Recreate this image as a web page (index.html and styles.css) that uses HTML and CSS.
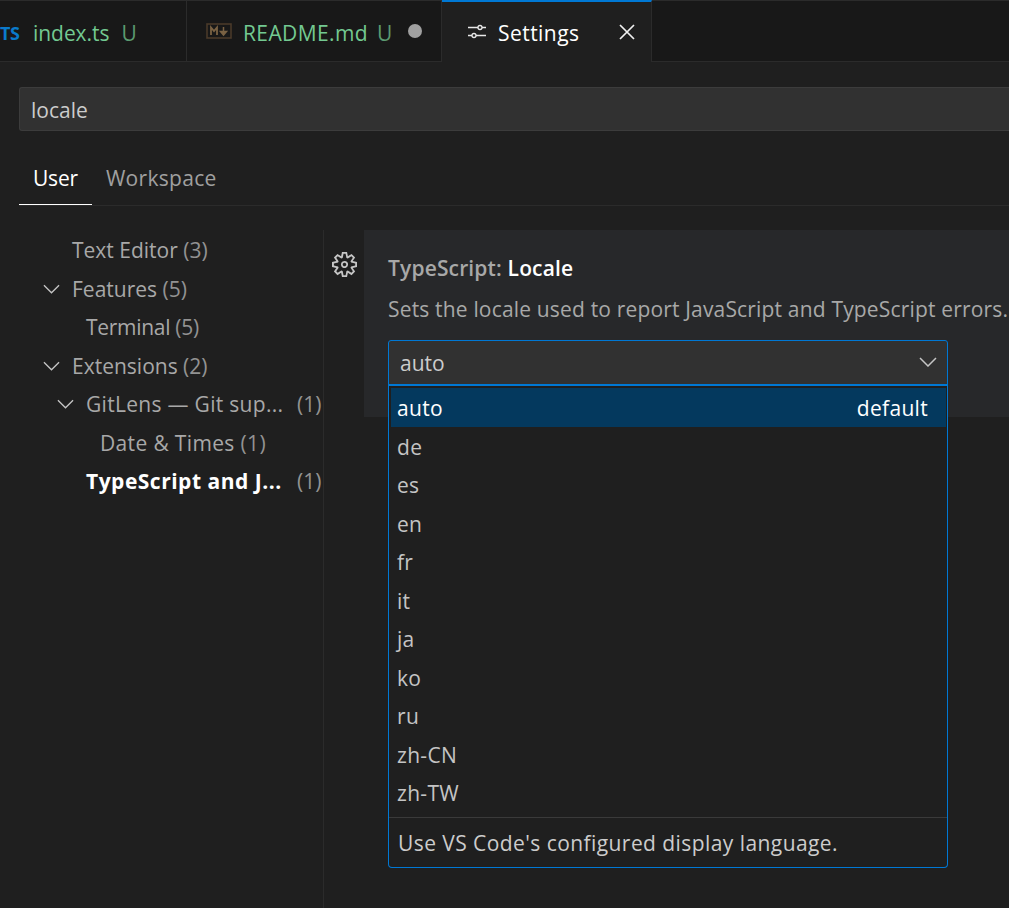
FILE: index.html
```html
<!DOCTYPE html>
<html lang="en">
<head>
    <meta charset="UTF-8">
    <title>Settings</title>
    <link rel="stylesheet" href="styles.css">
</head>
<body>
    <div class="tabs">
        <div class="tab tab-index">
            <span class="ts-icon">TS</span>
            <span class="tab-name name-index">index.ts</span>
            <span class="tab-u">U</span>
        </div>
        <div class="tab tab-readme">
            <svg class="md-icon" width="26" height="16" viewBox="0 0 26 16">
                <rect x="1" y="1" width="24" height="14" fill="none" stroke="#4a3a2a" stroke-width="1.6"/>
                <path d="M5 12V4.500l3 3.600 3-3.600V12" fill="none" stroke="#7a6243" stroke-width="1.8"/>
                <path d="M17.500 4v5M14.500 8.500h6L17.500 12z" fill="#7a6243" stroke="#7a6243" stroke-width="1.500"/>
            </svg>
            <span class="tab-name name-readme">README.md</span>
            <span class="tab-u">U</span>
            <span class="dirty-dot"></span>
        </div>
        <div class="tab tab-active">
            <svg class="sliders" width="20" height="20" viewBox="0 0 20 20" fill="none" stroke="#e8e8e8" stroke-width="1.300">
                <path d="M1 5.500h10M15 5.500h4M1 13.500h4M9 13.500h10"/>
                <circle cx="13" cy="5.500" r="2"/>
                <circle cx="7" cy="13.500" r="2"/>
            </svg>
            <span class="tab-title">Settings</span>
            <svg class="close" width="16" height="16" viewBox="0 0 16 16" fill="none" stroke="#f0f0f0" stroke-width="1.700">
                <path d="M1 1l14 14M15 1L1 15"/>
            </svg>
        </div>
        <div class="tabs-rest"></div>
    </div>

    <div class="search-row">
        <div class="search-box">locale</div>
    </div>

    <div class="scope-tabs">
        <div class="scope scope-on">User</div>
        <div class="scope">Workspace</div>
    </div>

    <div class="main">
        <div class="tree">
            <div class="row lvl-1"><span class="twist"></span>Text Editor <span class="count">(3)</span></div>
            <div class="row lvl-1"><span class="twist"><svg class="chev" viewBox="0 0 18 10"><path d="M1 1l8 8 8-8"/></svg></span>Features <span class="count">(5)</span></div>
            <div class="row lvl-2 row-term"><span class="twist"></span>Terminal <span class="count">(5)</span></div>
            <div class="row lvl-1"><span class="twist"><svg class="chev" viewBox="0 0 18 10"><path d="M1 1l8 8 8-8"/></svg></span>Extensions <span class="count">(2)</span></div>
            <div class="row lvl-2"><span class="twist"><svg class="chev" viewBox="0 0 18 10"><path d="M1 1l8 8 8-8"/></svg></span><span class="row-label">GitLens — Git sup...</span><span class="count">(1)</span></div>
            <div class="row lvl-3"><span class="twist"></span>Date &amp; Times <span class="count">(1)</span></div>
            <div class="row lvl-2"><span class="twist"></span><span class="row-label row-bold">TypeScript and J...</span><span class="count">(1)</span></div>
        </div>

        <div class="content">
            <div class="gear-col">
                <svg class="gear" width="25" height="25" viewBox="0 0 24 24" fill="#c5c5c5">
                    <path fill-rule="evenodd" d="M19.85 8.75l4.15.83v4.84l-4.15.83 2.35 3.52-3.43 3.43-3.52-2.35-.83 4.15H9.58l-.83-4.15-3.52 2.35-3.43-3.43 2.35-3.52L0 14.42V9.58l4.15-.83L1.8 5.23 5.23 1.8l3.52 2.35L9.58 0h4.84l.83 4.15 3.52-2.35 3.43 3.43-2.35 3.52zm-1.57 5.07l4-.81v-2l-4-.81-.54-1.3 2.29-3.43-1.43-1.43-3.43 2.29-1.3-.54-.81-4h-2l-.81 4-1.3.54-3.43-2.29-1.43 1.43L6.38 8.9l-.54 1.3-4 .81v2l4 .81.54 1.3-2.29 3.43 1.43 1.43 3.43-2.29 1.3.54.81 4h2l.81-4 1.3-.54 3.43 2.29 1.43-1.43-2.29-3.43.54-1.3zm-8.186-4.672A3.43 3.43 0 0 1 12 8.57 3.44 3.44 0 0 1 15.43 12a3.43 3.43 0 1 1-5.336-2.852zm.956 4.274c.281.188.612.288.95.288A1.7 1.7 0 0 0 13.71 12a1.71 1.71 0 1 0-2.66 1.422z"/>
                </svg>
            </div>
            <div class="setting">
                <div class="setting-title">TypeScript: <span class="setting-name">Locale</span></div>
                <div class="setting-desc">Sets the locale used to report JavaScript and TypeScript errors.</div>
                <div class="select">
                    <span>auto</span>
                    <svg class="select-chev" viewBox="0 0 18 10"><path d="M1 1l8 8 8-8"/></svg>
                    <div class="dropdown">
                        <div class="options">
                            <div class="option option-on"><span>auto</span><span>default</span></div>
                            <div class="option">de</div>
                            <div class="option">es</div>
                            <div class="option">en</div>
                            <div class="option">fr</div>
                            <div class="option">it</div>
                            <div class="option">ja</div>
                            <div class="option">ko</div>
                            <div class="option">ru</div>
                            <div class="option">zh-CN</div>
                            <div class="option">zh-TW</div>
                        </div>
                        <div class="option-desc">Use VS Code's configured display language.</div>
                    </div>
                </div>
            </div>
        </div>
    </div>
</body>
</html>
```
FILE: styles.css
```css
html, body {
    height: 100%;
}
body {
    margin: 0;
    width: 1009px;
    height: 908px;
    overflow: hidden;
    background-color: #1f1f1f;
    color: #cccccc;
    font-family: 'Open Sans', 'Noto Sans', sans-serif;
    font-size: 21px;
    display: flex;
    flex-direction: column;
}

/* tab strip */
.tabs {
    display: flex;
    height: 62px;
    flex: none;
    background-color: #181818;
}
.tab {
    display: flex;
    align-items: center;
    box-sizing: border-box;
    border-right: 1px solid #2b2b2b;
    border-bottom: 1px solid #2b2b2b;
    border-top: 1px solid #2b2b2b;
}
.tab-index {
    width: 187px;
    overflow: hidden;
}
.ts-icon {
    width: 33px;
    flex: none;
    color: #0a7acb;
    font-weight: 700;
    font-size: 18px;
    letter-spacing: -0.5px;
    padding-top: 3px;
}
.tab-readme {
    width: 255px;
    padding-left: 19px;
}
.md-icon {
    margin-right: 11px;
    flex: none;
}
.tab-name {
    color: #73c991;
    padding-top: 3px;
}
.name-index {
    letter-spacing: -0.05px;
}
.name-readme {
    letter-spacing: 0.4px;
}
.tab-u {
    color: #5b9a70;
    margin-left: 12px;
    padding-top: 3px;
}
.tab-readme .tab-u {
    margin-left: 9px;
}
.dirty-dot {
    width: 14px;
    height: 14px;
    border-radius: 50%;
    background-color: #a0a0a0;
    margin-left: 16px;
}
.tab-active {
    width: 210px;
    background-color: #1f1f1f;
    border-top: 2px solid #0078d4;
    border-bottom: none;
    padding-left: 25px;
    color: #ffffff;
}
.sliders {
    flex: none;
    margin-right: 11px;
}
.tab-title {
    flex: 1;
    letter-spacing: 0.45px;
    padding-top: 2px;
}
.close {
    margin-right: 16px;
}
.tabs-rest {
    flex: 1;
    border-top: 1px solid #2b2b2b;
    border-bottom: 1px solid #2b2b2b;
}

/* search */
.search-row {
    padding: 25px 0 0 19px;
    flex: none;
}
.search-box {
    box-sizing: border-box;
    width: 1010px;
    height: 44px;
    line-height: 45px;
    padding-left: 11px;
    background-color: #313131;
    border: 1px solid #3c3c3c;
    border-right: none;
    border-radius: 3px 0 0 3px;
}

/* user / workspace */
.scope-tabs {
    display: flex;
    flex: none;
    height: 75px;
    margin-left: 19px;
    border-bottom: 1px solid #2b2b2b;
    box-sizing: border-box;
    align-items: flex-start;
}
.scope {
    color: #a0a0a0;
    height: 48px;
    margin-top: 26px;
    line-height: 42px;
    padding: 0 14px;
    letter-spacing: 0.3px;
    box-sizing: border-box;
}
.scope-on {
    color: #ffffff;
    border-bottom: 1px solid #ffffff;
    letter-spacing: -0.2px;
}

/* tree */
.main {
    flex: 1;
    display: flex;
    padding-top: 24px;
}
.tree {
    width: 323px;
    flex: none;
    padding-top: 1px;
    box-sizing: border-box;
    color: #a8a8a8;
}
.row {
    display: flex;
    align-items: center;
    height: 38.5px;
    white-space: pre;
}
.lvl-1 {
    padding-left: 43px;
}
.lvl-2 {
    padding-left: 57px;
}
.lvl-3 {
    padding-left: 71px;
    letter-spacing: 0.35px;
}
.row-term {
    letter-spacing: -0.3px;
}
.twist {
    width: 29px;
    flex: none;
    display: flex;
    align-items: center;
}
.chev {
    width: 17px;
    height: 10px;
    fill: none;
    stroke: #c5c5c5;
    stroke-width: 1.4;
}
.count {
    color: #929292;
}
.row-label {
    width: 211px;
    flex: none;
    letter-spacing: 0.3px;
}
.row-bold {
    color: #ffffff;
    font-weight: 700;
    letter-spacing: 0.5px;
}

/* setting */
.content {
    flex: 1;
    display: flex;
    align-items: flex-start;
    border-left: 1px solid #2b2b2b;
    min-width: 0;
}
.gear-col {
    width: 40px;
    flex: none;
    padding: 22px 0 0 8px;
    box-sizing: border-box;
}
.gear {
    display: block;
}
.setting {
    flex: 1;
    height: 187px;
    background-color: #27282a;
    padding: 23px 0 0 24px;
    box-sizing: border-box;
    min-width: 0;
}
.setting-title {
    font-weight: 600;
    color: #a8a8a8;
    line-height: 30px;
    letter-spacing: 0.15px;
    white-space: nowrap;
}
.setting-name {
    color: #ffffff;
}
.setting-desc {
    color: #a8a8a8;
    margin-top: 11px;
    line-height: 30px;
    letter-spacing: 0.17px;
    white-space: nowrap;
}
.select {
    position: relative;
    width: 560px;
    height: 45px;
    margin-top: 16px;
    box-sizing: border-box;
    background-color: #313131;
    border: 1px solid #0078d4;
    border-radius: 3px 3px 0 0;
    padding: 0 11px;
    line-height: 44px;
}
.select-chev {
    position: absolute;
    right: 10px;
    top: 16px;
    width: 18px;
    height: 10px;
    fill: none;
    stroke: #c5c5c5;
    stroke-width: 1.5;
}

/* dropdown list */
.dropdown {
    position: absolute;
    left: -1px;
    top: 43px;
    width: 560px;
    height: 484px;
    box-sizing: border-box;
    background-color: #1f1f1f;
    border: 1px solid #0078d4;
    border-top-width: 2px;
    border-radius: 0 0 4px 4px;
    padding-top: 2px;
}
.options {
    padding: 0 1px 5px 2px;
    border-bottom: 1px solid #3a3a3a;
}
.option {
    height: 38.5px;
    line-height: 40px;
    padding-left: 6px;
    color: #c4c4c4;
    letter-spacing: 0.3px;
}
.option-on {
    display: flex;
    justify-content: space-between;
    background-color: #04395e;
    color: #ffffff;
    padding-right: 18px;
}
.option-desc {
    padding: 10px 0 0 9px;
    line-height: 30px;
    letter-spacing: 0.43px;
    white-space: nowrap;
}
```
